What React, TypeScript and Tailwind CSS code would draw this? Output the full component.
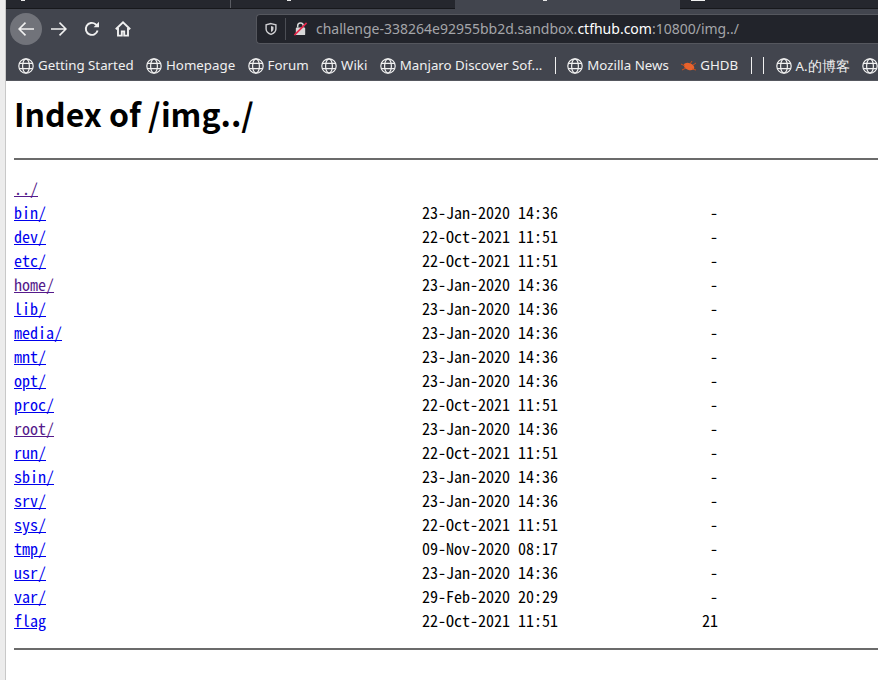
const rows = [
  { name: "../", date: "", size: "", visited: true },
  { name: "bin/", date: "23-Jan-2020 14:36", size: "-" },
  { name: "dev/", date: "22-Oct-2021 11:51", size: "-" },
  { name: "etc/", date: "22-Oct-2021 11:51", size: "-" },
  { name: "home/", date: "23-Jan-2020 14:36", size: "-", visited: true },
  { name: "lib/", date: "23-Jan-2020 14:36", size: "-" },
  { name: "media/", date: "23-Jan-2020 14:36", size: "-" },
  { name: "mnt/", date: "23-Jan-2020 14:36", size: "-" },
  { name: "opt/", date: "23-Jan-2020 14:36", size: "-" },
  { name: "proc/", date: "22-Oct-2021 11:51", size: "-" },
  { name: "root/", date: "23-Jan-2020 14:36", size: "-", visited: true },
  { name: "run/", date: "22-Oct-2021 11:51", size: "-" },
  { name: "sbin/", date: "23-Jan-2020 14:36", size: "-" },
  { name: "srv/", date: "23-Jan-2020 14:36", size: "-" },
  { name: "sys/", date: "22-Oct-2021 11:51", size: "-" },
  { name: "tmp/", date: "09-Nov-2020 08:17", size: "-" },
  { name: "usr/", date: "23-Jan-2020 14:36", size: "-" },
  { name: "var/", date: "29-Feb-2020 20:29", size: "-" },
  { name: "flag", date: "22-Oct-2021 11:51", size: "21" },
];

const bookmarks = ["Getting Started", "Homepage", "Forum", "Wiki", "Manjaro Discover Sof..."];

function GlobeIcon() {
  return (
    <svg viewBox="0 0 16 16" className="h-4 w-4 shrink-0" fill="none" stroke="#f0f0f0" strokeWidth="1.2">
      <circle cx="8" cy="8" r="7.2" />
      <ellipse cx="8" cy="8" rx="3.4" ry="7.2" />
      <path d="M1.2 5.4H14.8M1.2 10.6H14.8" />
    </svg>
  );
}

function Bookmark({ label }: { label: React.ReactNode }) {
  return (
    <div className="flex items-center gap-[4px]">
      <GlobeIcon />
      <span className="whitespace-nowrap">{label}</span>
    </div>
  );
}

function Separator() {
  return <div className="h-[17px] w-px bg-[#f0f0f0]" />;
}

export default function App() {
  return (
    <div className="flex h-[680px] w-[878px] overflow-hidden bg-white">
      <div className="w-[6px] shrink-0 border-r border-[#c8c8c8] bg-[#ececec]" />
      <div className="flex min-w-0 flex-1 flex-col">
        <div className="shrink-0 font-['Noto_Sans',sans-serif]">
          {/* Tab strip */}
          <div className="relative flex h-[9px] border-b border-[#17181c] bg-[#25272e]">
            <div className="ml-[224px] h-full w-px bg-[#5a5c63]" />
            <div className="ml-[224px] h-[9px] w-[225px] bg-[#42454e]" />
            <div className="absolute top-0 left-[15px] h-px w-[4px] bg-[#e8e8e8]" />
            <div className="absolute top-0 left-[281px] h-px w-[4px] bg-[#e8e8e8]" />
            <div className="absolute top-0 left-[537px] h-px w-[4px] bg-[#e8e8e8]" />
            <div className="absolute top-0 left-[685px] h-px w-[14px] bg-[#f0f0f0]" />
          </div>

          {/* Navigation */}
          <div className="flex h-[39px] items-center bg-[#42454e] pl-[4px] text-[#f0f0f0]">
            <div className="flex h-8 w-8 items-center justify-center rounded-full bg-[#71737a]">
              <svg viewBox="0 0 16 14" className="h-[14px] w-4" fill="none" stroke="#f0f0f0" strokeWidth="1.6">
                <path d="M16 7H1.2M7.5 .6 1.1 7l6.4 6.4" />
              </svg>
            </div>
            <svg viewBox="0 0 16 14" className="ml-[9px] h-[14px] w-4" fill="none" stroke="#f0f0f0" strokeWidth="1.6">
              <path d="M0 7H14.8M8.5 .6 14.9 7l-6.4 6.4" />
            </svg>
            <svg viewBox="0 0 16 16" className="ml-[17px] h-4 w-4" fill="none" stroke="#f0f0f0" strokeWidth="1.9">
              <path d="M13.6 9.5A6 6 0 1 1 11.6 3.2L14 5" />
              <path d="M15 .8V6.2H9.6Z" fill="#f0f0f0" stroke="none" />
            </svg>
            <svg viewBox="0 0 16 16" className="ml-[15px] h-4 w-4" fill="none" stroke="#f0f0f0" strokeWidth="1.9">
              <path d="M.8 8.2 8 1.4l7.2 6.8" />
              <path d="M3 7v7.6h3.8V10.4h2.4v4.2H13V7" />
            </svg>
            <div className="ml-[125px] flex h-[30px] flex-1 items-center rounded-l-[4px] border border-r-0 border-[#55575e] bg-[#22242b] pl-[7px] text-[14px]">
              <svg viewBox="0 0 16 16" className="h-[14px] w-[14px]" fill="none" stroke="#cfcfd2" strokeWidth="1.6">
                <path d="M8 1.8 13.6 3.2V8c0 3-2.6 5-5.6 6.2C5 13 2.4 11 2.4 8V3.2Z" />
                <path d="M8 4.5 10.8 5.4V8c0 1.6-1.2 2.7-2.8 3.5Z" fill="#cfcfd2" stroke="none" />
              </svg>
              <div className="ml-[7px] h-[22px] w-px bg-[#4c4e55]" />
              <svg viewBox="0 0 16 16" className="ml-[7px] h-[15px] w-[15px]">
                <path d="M5 7V5a3 3 0 0 1 6 0v2" fill="none" stroke="#d8d8d8" strokeWidth="1.6" />
                <rect x="3" y="7" width="10" height="8" rx="1" fill="#d8d8d8" />
                <path d="M1.5 15 14.5 2" stroke="#e8254a" strokeWidth="1.7" />
              </svg>
              <span className="ml-[8px] whitespace-nowrap text-[#a4a5a9]">
                challenge-338264e92955bb2d.sandbox.<span className="text-white">ctfhub.com</span>:10800/img../
              </span>
            </div>
          </div>

          {/* Bookmarks */}
          <div className="flex h-[33px] items-center gap-[12.4px] border-b border-[#55575e] bg-[#42454e] pt-[3px] pl-[12px] text-[13.3px] text-[#f0f0f0]">
            {bookmarks.map((label) => (
              <Bookmark key={label} label={label} />
            ))}
            <Separator />
            <Bookmark label="Mozilla News" />
            <div className="flex items-center gap-[3px]">
              <svg viewBox="0 0 16 16" className="h-4 w-4">
                <ellipse cx="8" cy="8.5" rx="5.5" ry="3.4" fill="#e8622c" transform="rotate(20 8 8.5)" />
                <path d="M0 6 4 8M1 12 5 10M11 3 9 6M15 5 12 7M15 12 11 11" stroke="#c9501f" strokeWidth="1" />
              </svg>
              <span>GHDB</span>
            </div>
            <Separator />
            <Separator />
            <Bookmark
              label={
                <>
                  A.<span className="text-[14px]">的博客</span>
                </>
              }
            />
            <GlobeIcon />
          </div>
        </div>

        {/* Directory listing */}
        <div className="px-[8px] text-black">
          <h1 className="mt-[9px] font-['Noto_Sans_CJK_SC','Noto_Sans',sans-serif] text-[32px] leading-[46px] font-bold">
            Index of /img../
          </h1>
          <hr className="mt-[22px] -mr-[8px] h-[2px] border-0 bg-[#6b6b6b]" />
          <div className="mt-[16px] font-['Noto_Sans_Mono_CJK_SC','Liberation_Mono',monospace] text-[16px] leading-[24px]">
            {rows.map((row) => (
              <div key={row.name} className="flex h-6 whitespace-pre">
                <a
                  href="#"
                  className={`w-[408px] underline ${row.visited ? "text-[#551a8b]" : "text-[#0000ee]"}`}
                >
                  {row.name}
                </a>
                <span className="w-[136px]">{row.date}</span>
                <span className="w-[160px] text-right">{row.size}</span>
              </div>
            ))}
          </div>
          <hr className="mt-[16px] -mr-[8px] h-[2px] border-0 bg-[#6b6b6b]" />
        </div>
      </div>
    </div>
  );
}
